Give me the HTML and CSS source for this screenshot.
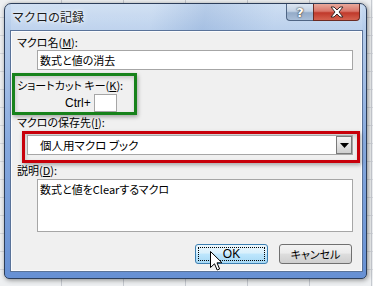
FILE: index.html
```html
<!DOCTYPE html>
<html lang="ja">
<head>
<meta charset="utf-8">
<title>マクロの記録</title>
<link rel="stylesheet" href="styles.css">
</head>
<body>
<div class="desk">
  <div class="window">
    <div class="titlebar">
      <span class="title">マクロの記録</span>
      <div class="caption-btns">
        <span class="cap help">?</span>
        <span class="cap close">
          <svg width="16" height="12" viewBox="0 0 16 12"><path d="M2 1 L5 1 L8 4 L11 1 L14 1 L10 6 L14 11 L11 11 L8 8 L5 11 L2 11 L6 6 Z" fill="#fff" stroke="#3b2a2a" stroke-width="1" stroke-linejoin="round"/></svg>
        </span>
      </div>
    </div>
    <div class="client">
      <div class="label l1">マクロ名(<u>M</u>):</div>
      <div class="textbox name">数式と値の消去</div>
      <div class="green">
        <div class="label l2">ショートカット キー(<u>K</u>):</div>
        <div class="ctrl-row"><span class="ctrl">Ctrl+</span><span class="keybox"></span></div>
      </div>
      <div class="label l3">マクロの保存先(<u>I</u>):</div>
      <div class="red">
        <div class="combo">
          <span class="combo-text">個人用マクロ ブック</span>
          <span class="drop"><svg width="9" height="5" viewBox="0 0 9 5"><path d="M0 0 H9 L4.5 5 Z" fill="#000"/></svg></span>
        </div>
      </div>
      <div class="label l4">説明(<u>D</u>):</div>
      <div class="textarea">数式と値をClearするマクロ</div>
      <div class="buttons">
        <div class="btn ok"><span class="focus">OK</span></div>
        <div class="btn cancel">キャンセル</div>
      </div>
    </div>
  </div>
  <svg class="cursor" width="13" height="20" viewBox="0 0 13 20"><path d="M0.5 0.5 L0.5 16.5 L4.5 12.8 L7.2 19 L9.6 18 L7 11.8 L12 11.8 Z" fill="#fff" stroke="#000" stroke-width="1" stroke-linejoin="round"/></svg>
</div>
</body>
</html>
```
FILE: styles.css
```css
html, body {
  margin: 0;
  padding: 0;
}
body {
  width: 373px;
  height: 286px;
  overflow: hidden;
  font-family: "Noto Sans CJK JP", "Noto Sans", sans-serif;
  font-size: 11px;
  color: #000;
}
.desk {
  position: relative;
  width: 373px;
  height: 286px;
  box-sizing: border-box;
  padding: 3px 0 0 4px;
  background-color: #eef0f2;
  background-image:
    repeating-linear-gradient(90deg, transparent 0 61px, #c6cad0 61px 62px),
    repeating-linear-gradient(180deg, transparent 0 17px, #d6d9de 17px 18px);
}
.window {
  width: 363px;
  height: 276px;
  box-sizing: border-box;
  border: 1px solid #2c3e5a;
  border-radius: 7px 7px 5px 5px;
  padding: 0 4px 7px 6px;
  display: flex;
  flex-direction: column;
  background: linear-gradient(180deg, #c9dbf1 0px, #b3cbea 27px, #a9c3e8 60px, #86a9de 140px, #6690d4 276px);
  box-shadow: 1px 1px 5px rgba(0,0,0,0.45);
}
.titlebar {
  height: 27px;
  display: flex;
  align-items: flex-start;
  background: linear-gradient(100deg, rgba(255,255,255,0.15) 0 40%, rgba(80,120,180,0.14) 55%, rgba(255,255,255,0.1) 75%);
}
.title {
  margin: 5px 0 0 1px;
  font-size: 12px;
  line-height: 16px;
  color: #1b1b1b;
  text-shadow: 0 0 6px #fff, 0 0 3px #fff;
}
.caption-btns {
  margin-left: auto;
  margin-right: 2px;
  display: flex;
}
.cap {
  height: 17px;
  box-sizing: border-box;
  display: flex;
  align-items: center;
  justify-content: center;
  border: 1px solid #4f6584;
  border-top: none;
}
.help {
  width: 27px;
  border-radius: 0 0 0 4px;
  border-right: none;
  background: linear-gradient(180deg, #dbe5f1 0%, #c3d2e4 45%, #94abc8 55%, #a9bed8 100%);
  color: #fff;
  font-family: "DejaVu Sans", sans-serif;
  font-weight: bold;
  font-size: 13px;
  text-shadow: 0 0 1px #333, 0 0 2px #333;
}
.close {
  width: 47px;
  border-color: #6b2a22;
  border-radius: 0 0 4px 0;
  background: linear-gradient(180deg, #e9a99b 0%, #d9766a 45%, #c0392b 55%, #d5624f 100%);
}
.close svg { display: block; }
.client {
  flex: 1;
  background: #f0f0f0;
  border: 1px solid #fbfcfe;
  box-shadow: 0 0 0 1px #5a7399;
  display: flex;
  flex-direction: column;
  font-feature-settings: "palt";
}
.label {
  line-height: 14px;
  height: 14px;
  white-space: nowrap;
}
.l1 { margin-top: 3px; padding-left: 5px; }
.textbox {
  margin: 1px 0 0 25px;
  width: 316px;
  height: 20px;
  box-sizing: border-box;
  background: #fff;
  border: 1px solid #a6a6a6;
  padding: 0 2px;
  line-height: 18px;
}
.green {
  margin: 3px 0 0 0;
  width: 125px;
  height: 42px;
  box-sizing: border-box;
  border: 3px solid #17821b;
  box-shadow: 1px 2px 4px rgba(0,0,0,0.3), inset 1px 2px 4px rgba(0,0,0,0.18);
}
.l2 { margin-top: 2px; padding-left: 2px; }
.ctrl-row {
  margin-top: 2px;
  padding-left: 50px;
  display: flex;
  align-items: center;
}
.ctrl {
  font-family: "Liberation Sans", sans-serif;
  font-size: 12px;
  width: 29px;
}
.keybox {
  width: 23px;
  height: 18px;
  box-sizing: border-box;
  background: #fff;
  border: 1px solid #a6a6a6;
}
.l3 { margin-top: 0; padding-left: 5px; }
.red {
  margin: 2px 0 0 10px;
  width: 338px;
  height: 32px;
  box-sizing: border-box;
  border: 3px solid #c8000a;
  box-shadow: 1px 2px 4px rgba(0,0,0,0.3), inset 1px 2px 4px rgba(0,0,0,0.18);
}
.combo {
  margin: 1px 0 0 2px;
  width: 326px;
  height: 20px;
  box-sizing: border-box;
  background: #fff;
  border: 1px solid #a6a6a6;
  display: flex;
  align-items: stretch;
}
.combo-text {
  flex: 1;
  padding-left: 12px;
  line-height: 18px;
  font-size: 11.5px;
}
.drop {
  width: 16px;
  box-sizing: border-box;
  border: 1px solid #7a7a7a;
  background: linear-gradient(180deg, #f4f4f4 0%, #e2e2e2 50%, #cfcfcf 100%);
  display: flex;
  align-items: center;
  justify-content: center;
}
.drop svg { display: block; }
.l4 { margin-top: 0; padding-left: 5px; }
.textarea {
  margin: 2px 0 0 25px;
  width: 316px;
  height: 53px;
  box-sizing: border-box;
  background: #fff;
  border: 1px solid #a6a6a6;
  padding: 1px 2px;
  line-height: 16px;
}
.buttons {
  margin-top: 12px;
  display: flex;
  justify-content: flex-end;
  gap: 11px;
  padding-right: 9px;
}
.btn {
  width: 73px;
  height: 20px;
  box-sizing: border-box;
  border: 1px solid #707070;
  border-radius: 3px;
  background: linear-gradient(180deg, #f2f2f2 0%, #ebebeb 45%, #dddddd 50%, #cfcfcf 100%);
  display: flex;
  align-items: center;
  justify-content: center;
  line-height: 14px;
}
.ok {
  border-color: #3c7fb1;
  background: linear-gradient(180deg, #eaf6fd 0%, #d9f0fc 45%, #bee6fd 50%, #a7d9f5 100%);
  padding: 2px;
}
.focus {
  flex: 1;
  align-self: stretch;
  display: flex;
  align-items: center;
  justify-content: center;
  border: 1px dotted #000;
  font-family: "Liberation Sans", sans-serif;
  font-size: 12px;
}
.cursor {
  position: absolute;
  left: 210px;
  top: 251px;
}
```
